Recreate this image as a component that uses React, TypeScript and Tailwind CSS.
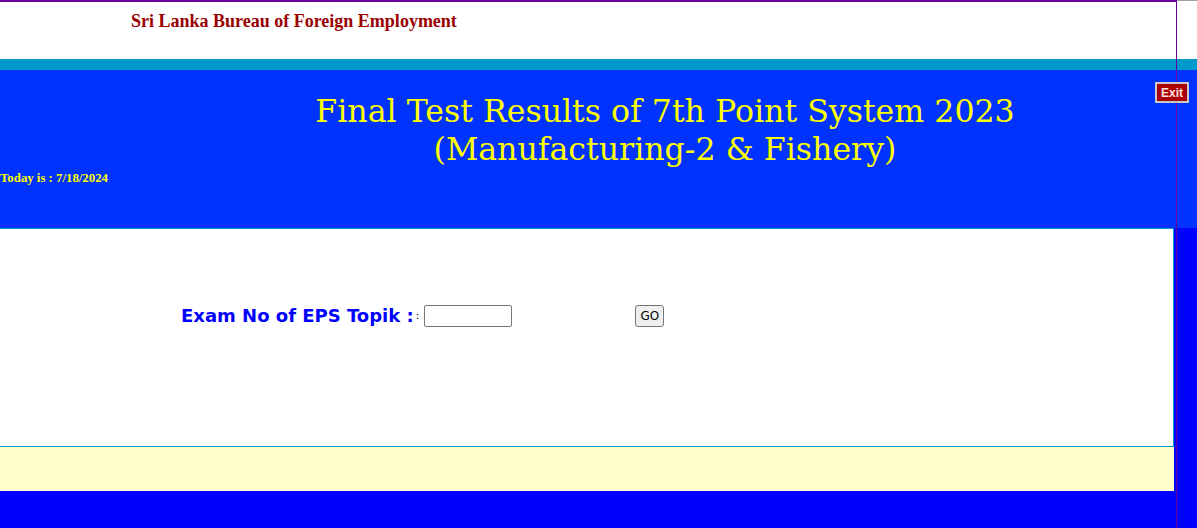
import React from "react";

export default function App() {
  return (
    <div className="relative w-[1197px] h-[528px] overflow-hidden bg-[#0000ff]">
      {/* top white header */}
      <div className="h-[59px] bg-white">
        <div className="flex">
          <div className="w-[1177px] h-[2px] bg-[#660099]" />
          <div className="flex-1 h-px bg-[#a0a0a0]" />
        </div>
        <div
          className="mt-[9px] pl-[131px] text-[18px] leading-[20px] font-bold text-[#990000]"
          style={{ fontFamily: '"Liberation Serif", serif' }}
        >
          Sri Lanka Bureau of Foreign Employment
        </div>
      </div>
      {/* cyan band */}
      <div className="h-[11px] bg-[#0099cc]" />
      {/* blue header */}
      <div className="h-[158px] bg-[#0033ff] pt-[22px]">
        <div
          className="pl-[133px] text-center text-[31.6px] leading-[38px] text-[#ffff00]"
          style={{ fontFamily: '"DejaVu Serif", serif' }}
        >
          <div>Final Test Results of 7th Point System 2023</div>
          <div>(Manufacturing-2 &amp; Fishery)</div>
        </div>
        <div
          className="mt-[3px] text-[12.8px] leading-[15px] font-bold text-[#ffff00]"
          style={{ fontFamily: '"Liberation Serif", serif' }}
        >
          Today is : 7/18/2024
        </div>
      </div>
      {/* content */}
      <div className="w-[1174px]">
        <div className="h-[219px] bg-white border-t border-b border-r border-[#0099cc] pt-[76px] pl-[181px]">
          <div className="flex items-start h-[22px]">
            <span
              className="text-[18px] leading-[22px] font-bold text-[#0000ff]"
              style={{ fontFamily: '"DejaVu Sans", Verdana, sans-serif' }}
            >
              Exam No of EPS Topik :
            </span>
            <span
              className="ml-[2px] text-[11px] leading-[22px] text-black self-end"
              style={{ fontFamily: '"DejaVu Sans", sans-serif' }}
            >
              :
            </span>
            <input
              type="text"
              className="ml-[5px] w-[88px] h-[22px] border border-[#767676] rounded-[2px] bg-white px-1 text-[13px]"
            />
            <button
              className="ml-[123px] w-[29px] h-[22px] border border-[#767676] rounded-[3px] bg-[#efefef] text-[12px] text-black flex items-center justify-center"
              style={{ fontFamily: '"DejaVu Sans", Arial, sans-serif' }}
            >
              GO
            </button>
          </div>
        </div>
        <div className="h-[44px] bg-[#ffffcc]" />
      </div>

      {/* vertical purple line */}
      <div className="absolute left-[1176px] top-0 w-px h-full bg-[#660099]" />
      {/* exit button */}
      <button
        className="absolute left-[1155px] top-[82px] w-[34px] h-[21px] border-2 border-[#c8c8c8] bg-[#aa0000] text-[12px] font-bold text-[#ffe0e0] flex items-center justify-center leading-none"
        style={{ fontFamily: '"Liberation Sans", Arial, sans-serif' }}
      >
        Exit
      </button>
    </div>
  );
}
